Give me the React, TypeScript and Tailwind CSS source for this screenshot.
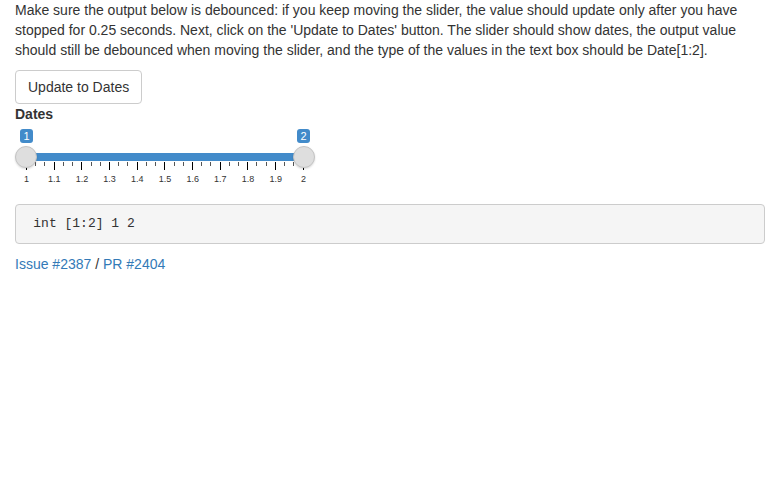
import React from "react";

const majors = ["1", "1.1", "1.2", "1.3", "1.4", "1.5", "1.6", "1.7", "1.8", "1.9", "2"];
const ticks = Array.from({ length: 31 }, (_, i) => i % 3 === 0);

function Handle() {
  return (
    <div className="relative z-10 shrink-0 w-[22px] h-[22px] rounded-full bg-[#dedede] border border-[#c4c4c4] shadow-[0_1px_2px_rgba(0,0,0,0.15)]" />
  );
}

function ValueLabel({ children }: { children: React.ReactNode }) {
  return (
    <div className="w-px flex justify-center">
      <span className="shrink-0 bg-[#428bca] text-white text-[11px] leading-[14px] px-[3px] rounded-[3px]">
        {children}
      </span>
    </div>
  );
}

function RangeSlider() {
  return (
    <div className="w-[300px] h-[60px] flex flex-col">
      <div className="flex justify-between px-[11px] h-[14px]">
        <ValueLabel>1</ValueLabel>
        <ValueLabel>2</ValueLabel>
      </div>
      <div className="flex items-center mt-[3px] h-[22px]">
        <Handle />
        <div className="flex-1 h-[8px] bg-[#428bca] -mx-[11px]" />
        <Handle />
      </div>
      <div className="flex justify-between items-start px-[11px] -mt-[6px] h-[8px]">
        {ticks.map((big, i) => (
          <div
            key={i}
            className={big ? "w-px h-[8px] bg-[#000]" : "w-px h-[4px] bg-[#555]"}
          />
        ))}
      </div>
      <div className="flex justify-between px-[11px] mt-[3px]">
        {majors.map((m) => (
          <div key={m} className="w-px flex justify-center">
            <span className="shrink-0 text-[9px] leading-[12px] text-[#333]">{m}</span>
          </div>
        ))}
      </div>
    </div>
  );
}

export default function App() {
  return (
    <div className="px-[15px] bg-white text-[#333] text-[14px] leading-[20px] font-['Liberation_Sans',Arial,sans-serif] min-h-[493px]">
      <p className="mb-[10px]">
        Make sure the output below is debounced: if you keep moving the slider, the value should update only after you have stopped for 0.25 seconds. Next, click on the 'Update to Dates' button. The slider should show dates, the output value should still be debounced when moving the slider, and the type of the values in the text box should be Date[1:2].
      </p>
      <button className="block border border-[#ccc] rounded-[4px] bg-white px-[12px] py-[6px] text-[14px] leading-[20px] text-[#333]">
        Update to Dates
      </button>
      <div className="w-[300px] mb-[15px]">
        <label className="inline-block font-bold mb-[5px]">Dates</label>
        <RangeSlider />
      </div>
      <pre className="m-0 mb-[10px] p-[9.5px] bg-[#f5f5f5] border border-[#ccc] rounded-[4px] text-[13px] leading-[18.57px] text-[#333] font-['Liberation_Mono','Courier_New',monospace] whitespace-pre">
        {" int [1:2] 1 2"}
      </pre>
      <div>
        <a className="text-[#337ab7]" href="#">Issue #2387</a> / <a className="text-[#337ab7]" href="#">PR #2404</a>
      </div>
    </div>
  );
}
